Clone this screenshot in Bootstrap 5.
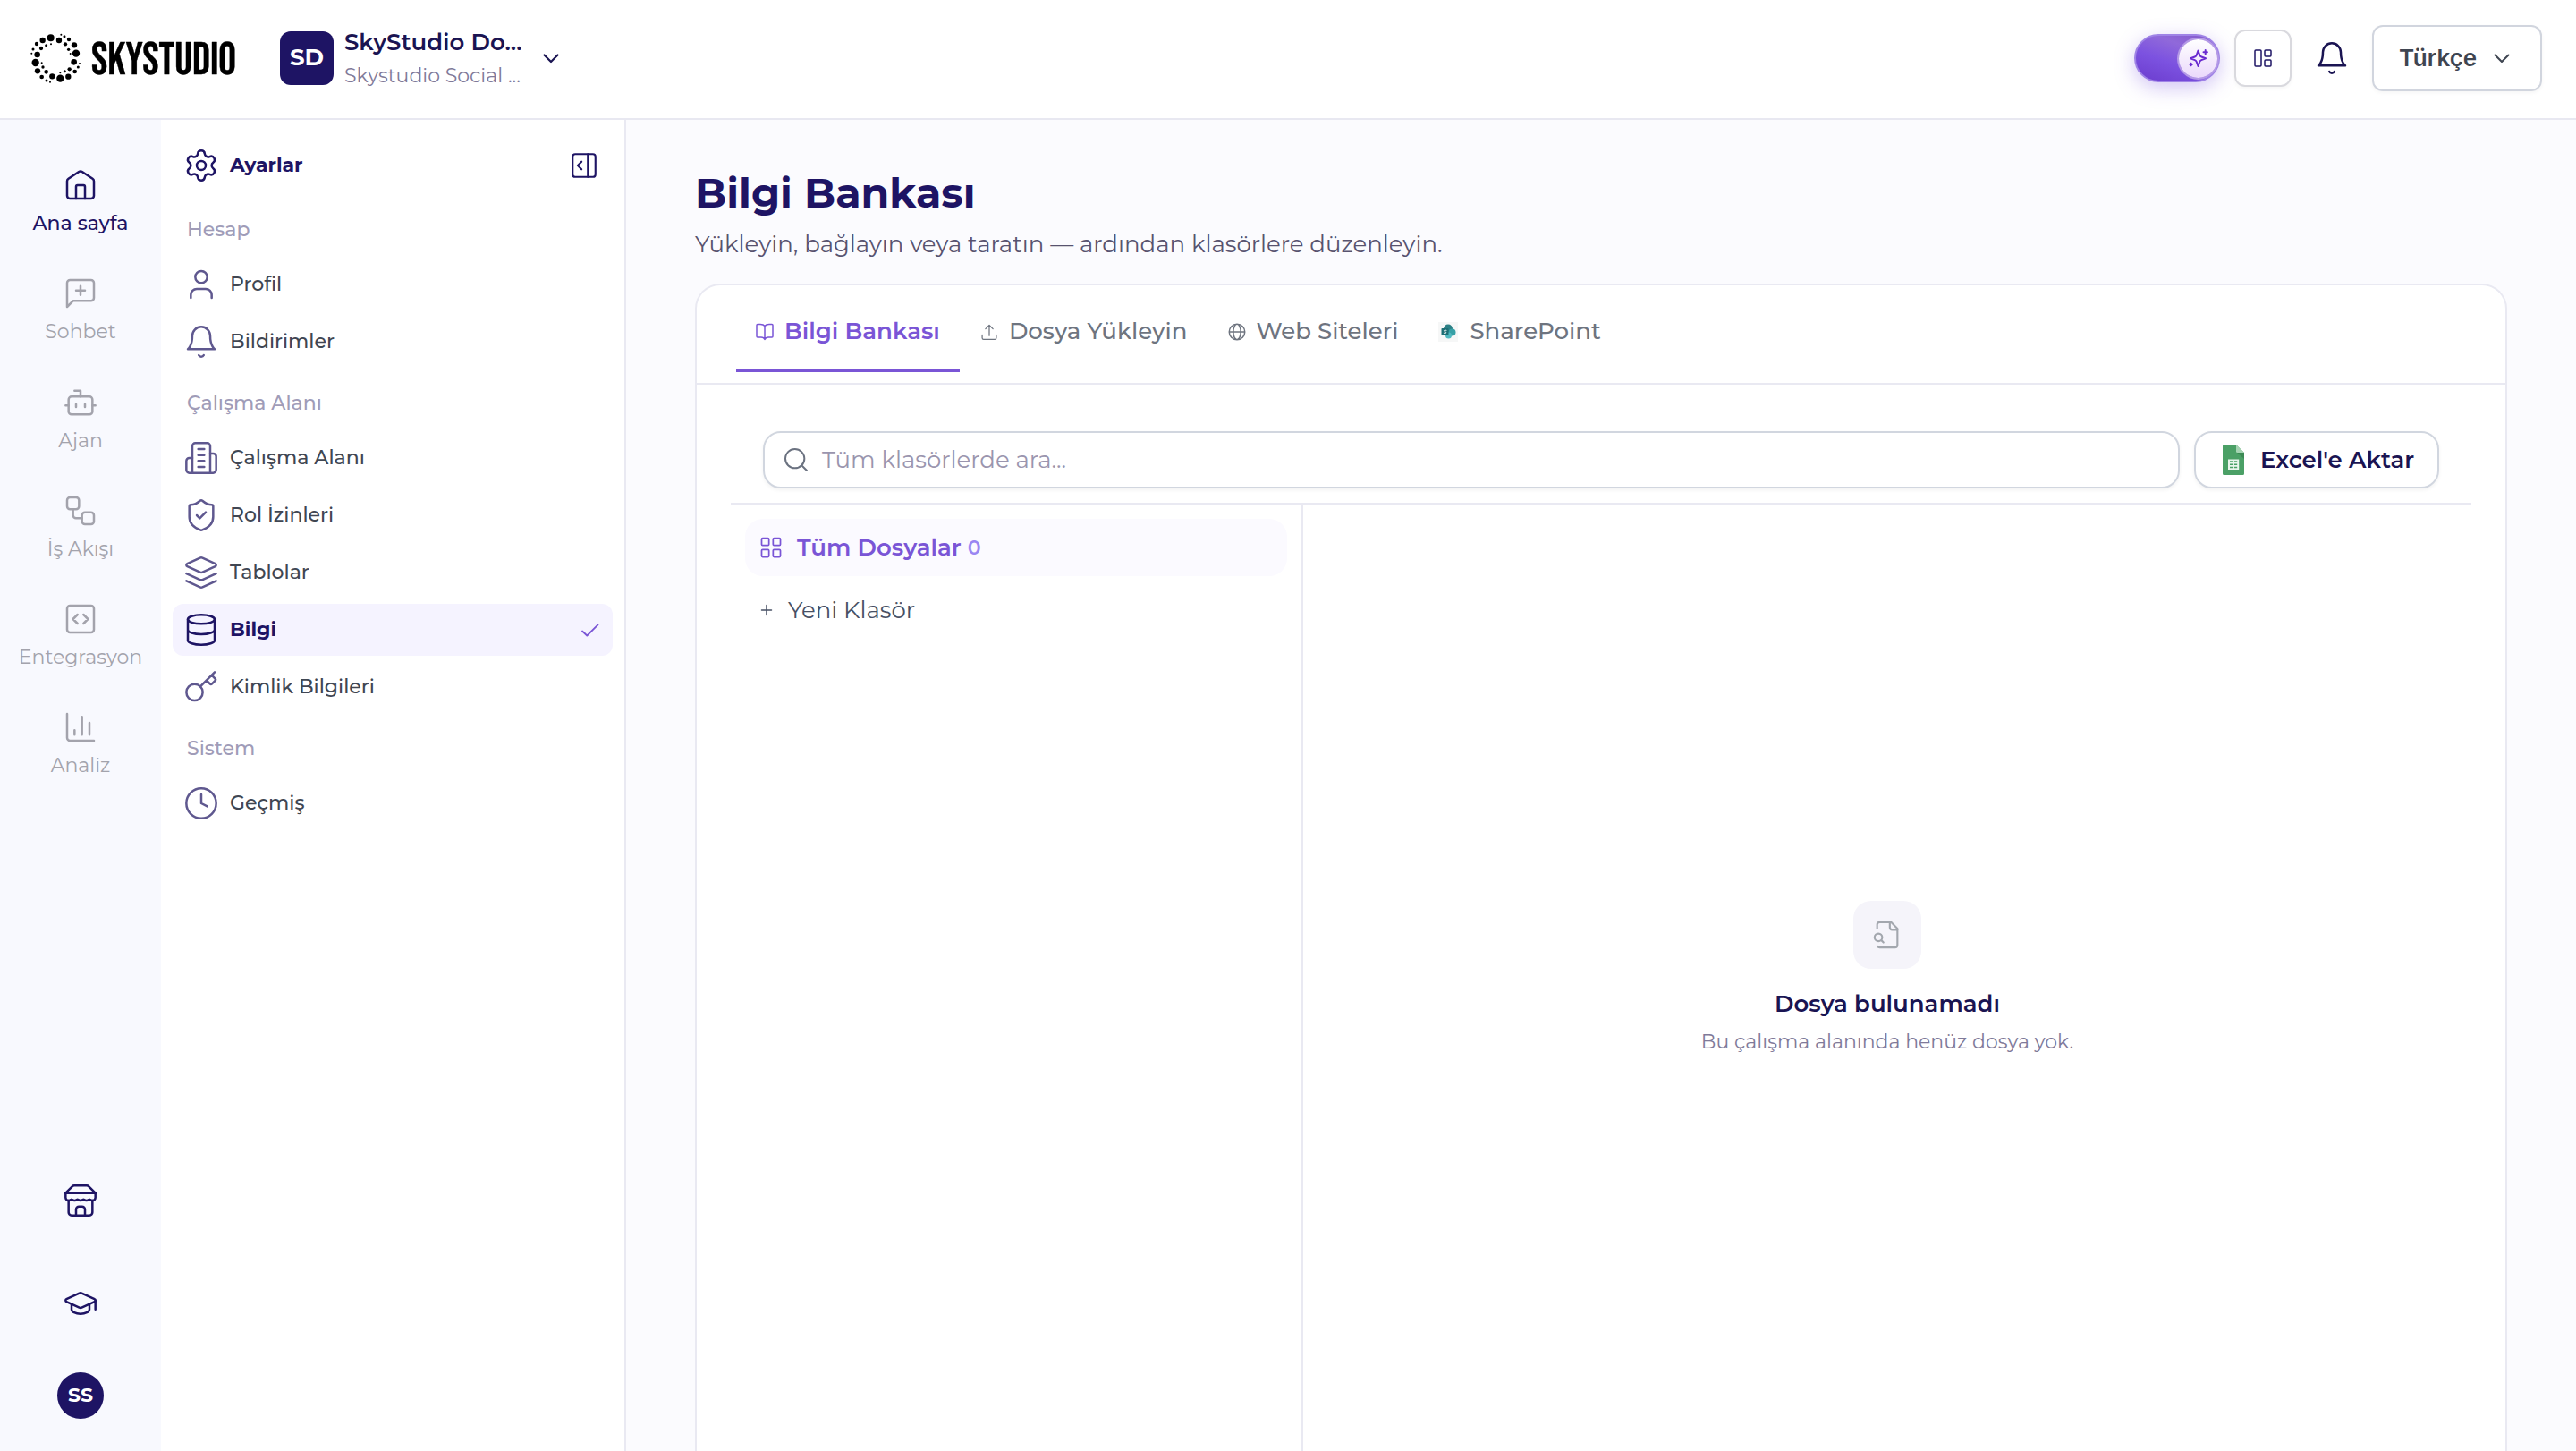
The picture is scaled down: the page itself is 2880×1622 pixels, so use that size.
<!DOCTYPE html>
<html lang="tr">
<head>
<meta charset="utf-8">
<meta name="viewport" content="width=device-width, initial-scale=1">
<title>SkyStudio – Bilgi Bankası</title>
<link href="https://cdn.jsdelivr.net/npm/bootstrap@5.3.0/dist/css/bootstrap.min.css" rel="stylesheet">
<style>
:root{--ink:#1e1464;--violet:#7a55d6;--line:#e9e9f2}
html,body{height:100%}
body{font-family:Montserrat,Inter,"Noto Sans",sans-serif;font-size:22px;line-height:1.2;color:#404652;background:#fff;overflow:hidden}
svg{display:block;flex:none;fill:none;stroke:currentColor;stroke-width:1.5;stroke-linecap:round;stroke-linejoin:round}
.i40{width:40px;height:40px}
a{color:inherit;text-decoration:none}
span,a,h1,p{white-space:nowrap}
.topbar{height:134px;border-bottom:2px solid #e8e8f1;padding:9px 38px 0 34px}
.topbar>div{height:112px}
.brand{width:229px;margin-right:50px}
.brand svg{fill:#000;stroke:none;overflow:visible}
.brand text{font-family:"Bebas Neue",Roboto,sans-serif;font-weight:400;font-size:50px;stroke:#000;stroke-width:.4px}
.ws-badge{width:60px;height:60px;border-radius:12px;background:var(--ink);color:#fff;font-size:26px;font-weight:700}
.ws-text{width:234px;padding:1px 0 0 12px;line-height:37px}
.ws-name{font-size:26px;font-weight:600;color:#1a1452}
.ws-sub{font-size:22px;color:#7f7a99}
.ws-chev{color:#1a1452}
.ai-toggle{width:96px;height:54px;border-radius:27px;padding:4px 1px 4px 4px;border:2px solid #9f83e6;background:linear-gradient(20deg,#6d3fd0 5%,#7c52e0 40%,#9069da 70%,#8258c8);box-shadow:0 6px 22px rgba(122,85,224,.35)}
.ai-knob{width:43px;height:43px;border-radius:50%;background:linear-gradient(#fff,#ead9fb);box-shadow:0 0 0 2px #b49ae6;color:#6a2bd0}
.btn-grid{width:64px;height:64px;border:2px solid #d9d9de;border-radius:12px;color:var(--ink);box-shadow:0 2px 4px rgba(0,0,0,.04);margin-left:16px}
.bell{margin-left:25px;color:#1a1452}
.btn-lang{width:190px;height:74px;border:2px solid #d1d5de;border-radius:12px;color:#3f4551;box-shadow:0 2px 4px rgba(0,0,0,.04);padding:0 34px 0 28px;margin-left:25px;font-family:Inter,sans-serif;font-size:26px;font-weight:600}
.work{min-height:0}
.rail{width:180px;background:#f8f9fe;color:#a3a3ac;padding-top:53px;padding-bottom:36px;flex:none}
.rail-item{height:121.3px;gap:10px}
.rail-item.on{color:var(--ink);font-weight:500}
.rail-foot{color:var(--ink)}
.cap{margin:75px 0 57px}
.avatar{width:52px;height:52px;background:var(--ink);color:#fff;font-size:22px;font-weight:700}
.side{width:520px;flex:none;border-right:2px solid var(--line);padding:22px 13px 0}
.side-row{height:58px;margin-bottom:6px;padding:0 12px;gap:12px;border-radius:12px;font-weight:500;color:#404652}
.side-row svg:first-child{color:#5f588f}
.side-row.on,.side-row.hd{color:var(--ink);font-weight:700}
.side-row.on{background:#f5f3ff}
.side-row.on svg:first-child,.side-row.hd svg:first-child{color:var(--ink)}
.side-row svg:last-child{margin-right:3px}
.side-sec{height:66px;padding:2px 16px 0;color:#a09cb8;font-weight:500}
.side-sec.first{height:69px;padding-top:5px}
.side .chk{color:var(--violet)}
.main{background:#fbfbfe;padding:0 77px 0 77px}
.pg-title{font-size:46px;font-weight:700;color:var(--ink);height:64px;margin:50px 0 0}
.pg-sub{font-size:26px;color:#58536f;height:41px;margin:5px 0 23px}
.panel{border:2px solid var(--line);border-bottom:0;border-radius:28px 28px 0 0;background:#fff}
.tabs{height:111px;border-bottom:2px solid var(--line);padding:8px 0 0 44px;gap:1px;color:#6e747f;font-size:26px;font-weight:500}
.tab{height:89px;padding:2px 22px 0;border-bottom:4px solid transparent;gap:12px}
.tab:last-child{gap:13px}
.tab.on{color:var(--violet);border-color:var(--violet);font-weight:600}
.tools{margin:0 38px;padding:52px 36px 16px;border-bottom:2px solid var(--line);gap:16px}
.search{height:64px;border:2px solid #d1d6df;border-radius:20px;box-shadow:0 2px 4px rgba(0,0,0,.05);padding-left:19px;gap:13px;color:#9a95ae;font-size:26px}
.search svg{color:#6b7280}
.btn-xls{width:274px;height:64px;border:2px solid #d1d6df;border-radius:20px;box-shadow:0 2px 4px rgba(0,0,0,.05);color:#1a1452;font-weight:600;font-size:26px;padding-left:30px;gap:18px}
.search span,.btn-xls span,.folder span{padding-top:2px}
.split{margin:0 38px}
.folders{width:640px;flex:none;border-right:2px solid var(--line);padding:16px 16px 0}
.folder{height:64px;border-radius:20px;margin-bottom:6px;padding-left:15px;font-size:26px;color:#475064;gap:15px}
.folder.on{background:#fbfaff;color:var(--violet);font-weight:600}
.folder .n0{font-size:22px;font-weight:600;color:#9a86f2;margin-left:-8px;padding-top:3px}
.none-box{width:76px;height:76px;border-radius:20px;background:#f5f4fa;color:#a3a7ae}
.none{padding-top:443px}
.none-t{font-size:26px;font-weight:600;color:#1a1452;margin:24px 0 0;height:32px}
.none-s{font-size:22px;color:#7f7a99;margin:13px 0 0}
</style>
<script src="https://cdn.jsdelivr.net/npm/bootstrap@5.3.0/dist/js/bootstrap.bundle.min.js"></script>
</head>
<body class="d-flex flex-column">
<header class="topbar d-flex justify-content-between flex-shrink-0">
  <div class="d-flex align-items-center">
    <a class="brand" href="#">
      <svg width="229" height="58" viewBox="34 36 229 58">
        <g transform="translate(26 30) scale(.3333)"><circle cx="92" cy="37" r="12"/><circle cx="120" cy="45" r="9.5"/><circle cx="65" cy="45" r="9.5"/><circle cx="171" cy="61" r="9.5"/><circle cx="153" cy="42" r="6.5"/><circle cx="138" cy="32" r="4.5"/><circle cx="127" cy="26" r="3"/><circle cx="45" cy="57" r="6.5"/><circle cx="33" cy="75" r="4.5"/><circle cx="28" cy="89" r="3"/><circle cx="60" cy="72" r="6.5"/><circle cx="77" cy="62" r="4.5"/><circle cx="93" cy="58" r="3"/><circle cx="47" cy="93" r="10"/><circle cx="41" cy="120" r="12.5"/><circle cx="48" cy="148" r="9.5"/><circle cx="177" cy="89" r="12.5"/><circle cx="141" cy="58" r="6.5"/><circle cx="152" cy="76" r="5"/><circle cx="158" cy="90" r="3"/><circle cx="170" cy="118" r="10"/><circle cx="173" cy="150" r="7"/><circle cx="184" cy="135" r="4.5"/><circle cx="189" cy="123" r="3"/><circle cx="151" cy="167" r="9.5"/><circle cx="124" cy="173" r="12.5"/><circle cx="97" cy="166" r="9.5"/><circle cx="62" cy="168" r="7"/><circle cx="78" cy="180" r="4.5"/><circle cx="90" cy="185" r="3"/><circle cx="77" cy="151" r="7"/><circle cx="66" cy="135" r="5"/><circle cx="62" cy="121" r="3"/><circle cx="155" cy="142" r="6.5"/><circle cx="139" cy="149" r="4.5"/><circle cx="124" cy="154" r="3"/></g>
        <text x="102" y="82.600" textLength="162" lengthAdjust="spacingAndGlyphs">SKYSTUDIO</text>
      </svg>
    </a>
    <div class="d-flex align-items-center">
      <div class="ws-badge d-flex align-items-center justify-content-center">SD</div>
      <div class="ws-text d-flex flex-column"><span class="ws-name">SkyStudio Do...</span><span class="ws-sub">Skystudio Social ...</span></div>
      <svg class="ws-chev" width="18" height="11" viewBox="0 0 18 11"><path stroke-width="2.2" d="M1.500 1.500 9 9l7.500-7.500"/></svg>
    </div>
  </div>
  <div class="d-flex align-items-center">
    <div class="ai-toggle d-flex justify-content-end align-items-center"><div class="ai-knob d-flex align-items-center justify-content-center">
      <svg width="22" height="22" viewBox="0 0 22 22"><path stroke-width="2" d="M10.500 2.600 12.300 7.600Q12.800 9 14.200 9.500L19 11.300 14.200 13.100Q12.800 13.600 12.300 15L10.500 20 8.700 15Q8.200 13.600 6.800 13.100L2 11.300 6.800 9.500Q8.200 9 8.700 7.600Z"/><path stroke-width="2" d="M18.700 2v4.400M16.500 4.200h4.400M2.600 16.800v2.400M1.400 18h2.400"/></svg></div></div>
    <div class="btn-grid d-flex align-items-center justify-content-center"><svg width="24" height="24" viewBox="0 0 24 24"><rect x="3" y="3" width="7" height="18" rx="1"/><rect x="14" y="3" width="7" height="7" rx="1"/><rect x="14" y="14" width="7" height="7" rx="1"/></svg></div>
    <svg class="i40 bell" viewBox="0 0 24 24"><path d="M6 8a6 6 0 0 1 12 0c0 7 3 9 3 9H3s3-2 3-9"/><path d="M10.300 21a1.940 1.940 0 0 0 3.400 0"/></svg>
    <div class="btn-lang d-flex align-items-center justify-content-between"><span>Türkçe</span><svg width="18" height="11" viewBox="0 0 18 11"><path stroke-width="2" d="M1.500 1.500 9 9l7.500-7.500"/></svg></div>
  </div>
</header>

<div class="work d-flex flex-grow-1">
  <nav class="rail d-flex flex-column justify-content-between">
    <div>
      <a class="rail-item on d-flex flex-column align-items-center" href="#"><svg class="i40" viewBox="0 0 24 24"><path d="M3 9.300a2 2 0 0 1 .9-1.650l7-4.650a2 2 0 0 1 2.200 0l7 4.650A2 2 0 0 1 21 9.300V19a2 2 0 0 1-2 2H5a2 2 0 0 1-2-2z"/><path d="M15 21v-8a1 1 0 0 0-1-1h-4a1 1 0 0 0-1 1v8"/></svg><span>Ana sayfa</span></a>
      <a class="rail-item d-flex flex-column align-items-center" href="#"><svg class="i40" viewBox="0 0 24 24"><path d="M21 15a2 2 0 0 1-2 2H7l-4 4V5a2 2 0 0 1 2-2h14a2 2 0 0 1 2 2z"/><path d="M12 7v6M9 10h6"/></svg><span>Sohbet</span></a>
      <a class="rail-item d-flex flex-column align-items-center" href="#"><svg class="i40" viewBox="0 0 24 24"><path d="M12 8V4H8"/><rect width="16" height="12" x="4" y="8" rx="2"/><path d="M2 14h2M20 14h2M15 13v2M9 13v2"/></svg><span>Ajan</span></a>
      <a class="rail-item d-flex flex-column align-items-center" href="#"><svg class="i40" viewBox="0 0 24 24"><rect width="8" height="8" x="3" y="3" rx="2"/><path d="M7 11v4a2 2 0 0 0 2 2h4"/><rect width="8" height="8" x="13" y="13" rx="2"/></svg><span>İş Akışı</span></a>
      <a class="rail-item d-flex flex-column align-items-center" href="#"><svg class="i40" viewBox="0 0 24 24"><path d="m10 9-3 3 3 3M14 15l3-3-3-3"/><rect width="18" height="18" x="3" y="3" rx="2"/></svg><span>Entegrasyon</span></a>
      <a class="rail-item d-flex flex-column align-items-center" href="#"><svg class="i40" viewBox="0 0 24 24"><path d="M3 3v16a2 2 0 0 0 2 2h16M18 17V9M13 17V5M8 17v-3"/></svg><span>Analiz</span></a>
    </div>
    <div class="rail-foot d-flex flex-column align-items-center">
      <svg class="i40" viewBox="0 0 24 24"><path d="m2 7 4.410-4.410A2 2 0 0 1 7.830 2h8.340a2 2 0 0 1 1.420.59L22 7"/><path d="M4 12v8a2 2 0 0 0 2 2h12a2 2 0 0 0 2-2v-8M15 22v-4a2 2 0 0 0-2-2h-2a2 2 0 0 0-2 2v4M2 7h20"/><path d="M22 7v3a2 2 0 0 1-2 2a2.700 2.700 0 0 1-1.590-.63.7.7 0 0 0-.82 0A2.700 2.700 0 0 1 16 12a2.700 2.700 0 0 1-1.590-.63.7.7 0 0 0-.82 0A2.700 2.700 0 0 1 12 12a2.700 2.700 0 0 1-1.590-.63.7.7 0 0 0-.82 0A2.700 2.700 0 0 1 8 12a2.700 2.700 0 0 1-1.590-.63.7.7 0 0 0-.82 0A2.700 2.700 0 0 1 4 12a2 2 0 0 1-2-2V7"/></svg>
      <svg class="i40 cap" viewBox="0 0 24 24"><path d="M21.420 10.922a1 1 0 0 0-.019-1.838L12.830 5.180a2 2 0 0 0-1.660 0L2.600 9.080a1 1 0 0 0 0 1.832l8.570 3.908a2 2 0 0 0 1.660 0z"/><path d="M22 10v6M6 12.500V16a6 3 0 0 0 12 0v-3.500"/></svg>
      <div class="avatar rounded-circle d-flex align-items-center justify-content-center">SS</div>
    </div>
  </nav>

  <aside class="side">
    <div class="side-row hd d-flex align-items-center"><svg class="i40" viewBox="0 0 24 24"><path d="M9.671 4.136a2.340 2.340 0 0 1 4.659 0 2.340 2.340 0 0 0 3.319 1.915 2.340 2.340 0 0 1 2.330 4.033 2.340 2.340 0 0 0 0 3.831 2.340 2.340 0 0 1-2.330 4.033 2.340 2.340 0 0 0-3.319 1.915 2.340 2.340 0 0 1-4.659 0 2.340 2.340 0 0 0-3.320-1.915 2.340 2.340 0 0 1-2.330-4.033 2.340 2.340 0 0 0 0-3.831A2.340 2.340 0 0 1 6.350 6.051a2.340 2.340 0 0 0 3.319-1.915"/><circle cx="12" cy="12" r="3"/></svg><span>Ayarlar</span><svg class="ms-auto" width="34" height="34" viewBox="0 0 24 24"><rect width="18" height="18" x="3" y="3" rx="2"/><path d="M15 3v18M10 15l-3-3 3-3"/></svg></div>
    <div class="side-sec first d-flex align-items-center">Hesap</div>
    <a class="side-row d-flex align-items-center" href="#"><svg class="i40" viewBox="0 0 24 24"><path d="M19 21v-2a4 4 0 0 0-4-4H9a4 4 0 0 0-4 4v2"/><circle cx="12" cy="7" r="4"/></svg><span>Profil</span></a>
    <a class="side-row d-flex align-items-center" href="#"><svg class="i40" viewBox="0 0 24 24"><path d="M6 8a6 6 0 0 1 12 0c0 7 3 9 3 9H3s3-2 3-9"/><path d="M10.300 21a1.940 1.940 0 0 0 3.400 0"/></svg><span>Bildirimler</span></a>
    <div class="side-sec d-flex align-items-center">Çalışma Alanı</div>
    <a class="side-row d-flex align-items-center" href="#"><svg class="i40" viewBox="0 0 24 24"><path d="M6 22V4a2 2 0 0 1 2-2h8a2 2 0 0 1 2 2v18Z"/><path d="M6 12H4a2 2 0 0 0-2 2v6a2 2 0 0 0 2 2h2M18 9h2a2 2 0 0 1 2 2v9a2 2 0 0 1-2 2h-2M10 6h4M10 10h4M10 14h4M10 18h4"/></svg><span>Çalışma Alanı</span></a>
    <a class="side-row d-flex align-items-center" href="#"><svg class="i40" viewBox="0 0 24 24"><path d="M20 13c0 5-3.500 7.500-7.660 8.950a1 1 0 0 1-.67-.01C7.500 20.500 4 18 4 13V6a1 1 0 0 1 1-1c2 0 4.500-1.200 6.240-2.720a1.170 1.170 0 0 1 1.520 0C14.510 3.810 17 5 19 5a1 1 0 0 1 1 1z"/><path d="m9 12 2 2 4-4"/></svg><span>Rol İzinleri</span></a>
    <a class="side-row d-flex align-items-center" href="#"><svg class="i40" viewBox="0 0 24 24"><path d="m12.830 2.180a2 2 0 0 0-1.660 0L2.600 6.080a1 1 0 0 0 0 1.830l8.580 3.910a2 2 0 0 0 1.660 0l8.580-3.900a1 1 0 0 0 0-1.830Z"/><path d="m22 17.650-9.170 4.160a2 2 0 0 1-1.660 0L2 17.650M22 12.650l-9.170 4.160a2 2 0 0 1-1.660 0L2 12.650"/></svg><span>Tablolar</span></a>
    <a class="side-row on d-flex align-items-center" href="#"><svg class="i40" viewBox="0 0 24 24"><ellipse cx="12" cy="5" rx="9" ry="3"/><path d="M3 5v14a9 3 0 0 0 18 0V5M3 12a9 3 0 0 0 18 0"/></svg><span>Bilgi</span><svg class="chk ms-auto" width="20" height="15" viewBox="0 0 20 15"><path stroke-width="1.800" d="M1 8.500 6.300 13.500 18.500 1.300"/></svg></a>
    <a class="side-row d-flex align-items-center" href="#"><svg class="i40" viewBox="0 0 24 24"><path d="m15.500 7.500 2.300 2.300a1 1 0 0 0 1.400 0l2.100-2.100a1 1 0 0 0 0-1.400L19 4M21 2l-9.600 9.600"/><circle cx="7.500" cy="15.500" r="5.500"/></svg><span>Kimlik Bilgileri</span></a>
    <div class="side-sec d-flex align-items-center">Sistem</div>
    <a class="side-row d-flex align-items-center" href="#"><svg class="i40" viewBox="0 0 24 24"><circle cx="12" cy="12" r="10"/><path d="M12 6v6l4 2"/></svg><span>Geçmiş</span></a>
  </aside>

  <main class="main flex-grow-1 d-flex flex-column">
    <h1 class="pg-title d-flex align-items-center">Bilgi Bankası</h1>
    <p class="pg-sub d-flex align-items-center">Yükleyin, bağlayın veya taratın — ardından klasörlere düzenleyin.</p>
    <section class="panel flex-grow-1 d-flex flex-column">
      <div class="tabs d-flex">
        <a class="tab on d-flex align-items-center" href="#"><svg width="20" height="22" viewBox="0 0 20 22"><path d="M10 4.500v15M10 4.500C9 3 7.500 2.500 5 2.500H2a1 1 0 0 0-1 1V16a1 1 0 0 0 1 1h4c2.200 0 3.300.8 4 2.500.7-1.700 1.800-2.500 4-2.500h4a1 1 0 0 0 1-1V3.500a1 1 0 0 0-1-1h-3c-2.500 0-4 .5-5 2"/></svg><span>Bilgi Bankası</span></a>
        <a class="tab d-flex align-items-center" href="#"><svg width="20" height="20" viewBox="0 0 24 24"><path d="M12 17V3M7 8l5-5 5 5M2.500 16v4a2 2 0 0 0 2 2h15a2 2 0 0 0 2-2v-4"/></svg><span>Dosya Yükleyin</span></a>
        <a class="tab d-flex align-items-center" href="#"><svg width="20" height="20" viewBox="0 0 24 24"><path stroke-width="1.800" d="M12 1.500a10.500 10.500 0 1 0 0 21a10.500 10.500 0 1 0 0-21a5 10.500 0 1 0 0 21a5 10.500 0 1 0 0-21M1.500 12h21"/></svg><span>Web Siteleri</span></a>
        <a class="tab d-flex align-items-center" href="#"><svg width="22" height="22" viewBox="0 0 22 22"><g stroke="none"><path fill="#f6f7f7" d="M0 0h22v22H0z"/><circle cx="11" cy="7.500" r="5" fill="#2b7f85"/><circle cx="15.500" cy="11.500" r="4" fill="#37a0a6"/><circle cx="11.500" cy="15" r="3.500" fill="#4fb9c0"/><rect x="3.500" y="7" width="8" height="8" rx=".8" fill="#1c6f75"/></g><path fill="none" stroke="#fff" stroke-width=".9" d="M9 9.300q-2.500-1-2.500.4 0 .8 1.200 1.100 1.300.3 1.200 1.100-.2 1.200-2.600.4"/></svg><span>SharePoint</span></a>
      </div>
      <div class="tools d-flex">
        <div class="search flex-grow-1 d-flex align-items-center"><svg width="32" height="32" viewBox="0 0 24 24"><circle cx="11" cy="11" r="8"/><path d="m21 21-4.300-4.300"/></svg><span>Tüm klasörlerde ara...</span></div>
        <div class="btn-xls d-flex align-items-center"><svg width="24" height="34" viewBox="0 0 24 34"><g stroke="none"><path fill="#4ba066" d="M1.500 0H15l9 9v23.500a1.500 1.500 0 0 1-1.500 1.500h-21A1.500 1.500 0 0 1 0 32.500v-31A1.500 1.500 0 0 1 1.500 0Z"/><path fill="#3c8a54" d="m16 9 8 7V9z"/><path fill="#a5d3b2" d="M15 0v7.500A1.500 1.500 0 0 0 16.500 9H24z"/><path fill="#eaf5ed" fill-rule="evenodd" d="M6 16.500h12.200v11.500H6zM8 18.200v1.500h3.300v-1.500zm4.900 0v1.500h3.300v-1.500zM8 21.500V23h3.300v-1.500zm4.900 0V23h3.300v-1.500zM8 24.800v1.500h3.300v-1.500zm4.900 0v1.500h3.300v-1.500z"/></g></svg><span>Excel'e Aktar</span></div>
      </div>
      <div class="split d-flex flex-grow-1">
        <div class="folders">
          <div class="folder on d-flex align-items-center"><svg width="28" height="28" viewBox="0 0 24 24"><rect width="7" height="7" x="3" y="3" rx="1"/><rect width="7" height="7" x="14" y="3" rx="1"/><rect width="7" height="7" x="14" y="14" rx="1"/><rect width="7" height="7" x="3" y="14" rx="1"/></svg><span>Tüm Dosyalar</span><span class="n0">0</span></div>
          <div class="folder d-flex align-items-center"><svg width="18" height="18" viewBox="0 0 18 18"><path d="M9 3.500v11M3.500 9h11"/></svg><span>Yeni Klasör</span></div>
        </div>
        <div class="none flex-grow-1 d-flex flex-column align-items-center">
          <div class="none-box d-flex align-items-center justify-content-center"><svg width="34" height="34" viewBox="0 0 24 24"><path d="M14 2v4a2 2 0 0 0 2 2h4"/><path d="M4.268 21a2 2 0 0 0 1.727 1H18a2 2 0 0 0 2-2V7l-5-5H6a2 2 0 0 0-2 2v3M9 18l-1.500-1.500"/><circle cx="5" cy="14" r="3"/></svg></div>
          <p class="none-t">Dosya bulunamadı</p>
          <p class="none-s">Bu çalışma alanında henüz dosya yok.</p>
        </div>
      </div>
    </section>
  </main>
</div>
</body>
</html>
